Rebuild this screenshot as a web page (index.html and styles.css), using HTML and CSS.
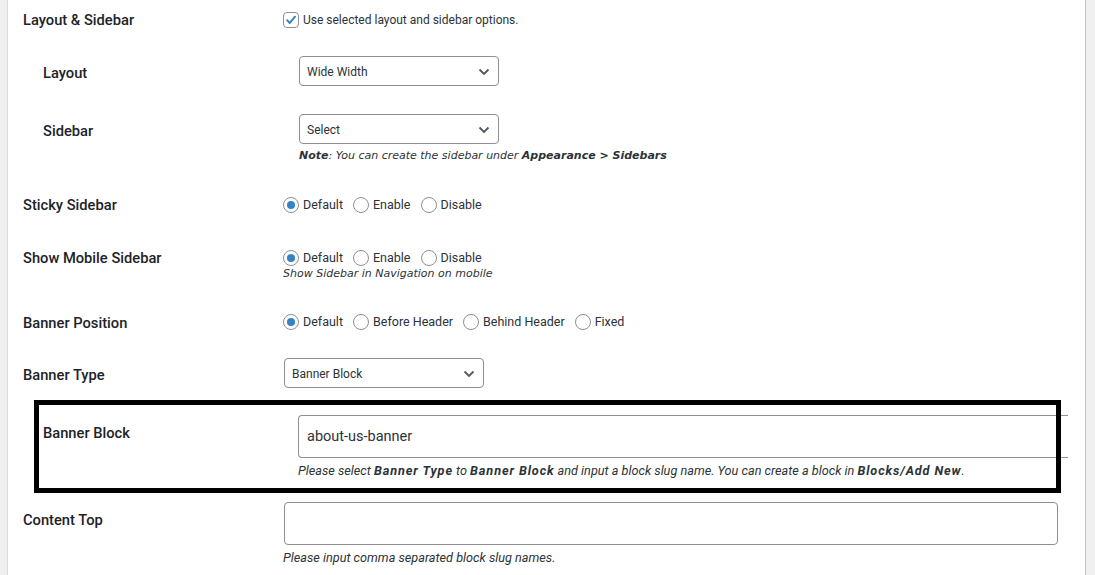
FILE: index.html
```html
<!DOCTYPE html>
<html>
<head>
<meta charset="utf-8">
<link rel="stylesheet" href="styles.css">
</head>
<body>
<div class="panel">
  <div class="row row-a">
    <div class="label">Layout &amp; Sidebar</div>
    <div class="field">
      <label class="check">
        <span class="checkbox"><svg viewBox="0 0 16 16" width="16" height="16"><path d="M3.6 8.2 L6.6 11.4 L12.6 4.2" fill="none" stroke="#3582c4" stroke-width="2.2" stroke-linecap="round" stroke-linejoin="round"/></svg></span>
        <span class="text">Use selected layout and sidebar options.</span>
      </label>
    </div>
  </div>

  <div class="row sub row-b">
    <div class="label sel-label">Layout</div>
    <div class="field">
      <div class="select"><span>Wide Width</span><svg class="chev" viewBox="0 0 12 8" width="12" height="8"><path d="M1.5 1.5 L6 6 L10.5 1.5" fill="none" stroke="#50575e" stroke-width="1.8"/></svg></div>
    </div>
  </div>

  <div class="row sub row-c">
    <div class="label sel-label">Sidebar</div>
    <div class="field">
      <div class="select"><span>Select</span><svg class="chev" viewBox="0 0 12 8" width="12" height="8"><path d="M1.5 1.5 L6 6 L10.5 1.5" fill="none" stroke="#50575e" stroke-width="1.8"/></svg></div>
      <p class="note"><b>Note</b>: You can create the sidebar under <b>Appearance &gt; Sidebars</b></p>
    </div>
  </div>

  <div class="row row-d">
    <div class="label">Sticky Sidebar</div>
    <div class="field">
      <div class="radios">
        <label class="opt"><span class="radio on"></span>Default</label>
        <label class="opt"><span class="radio"></span>Enable</label>
        <label class="opt"><span class="radio"></span>Disable</label>
      </div>
    </div>
  </div>

  <div class="row row-e">
    <div class="label">Show Mobile Sidebar</div>
    <div class="field">
      <div class="radios">
        <label class="opt"><span class="radio on"></span>Default</label>
        <label class="opt"><span class="radio"></span>Enable</label>
        <label class="opt"><span class="radio"></span>Disable</label>
      </div>
      <p class="hint">Show Sidebar in Navigation on mobile</p>
    </div>
  </div>

  <div class="row row-f">
    <div class="label">Banner Position</div>
    <div class="field">
      <div class="radios">
        <label class="opt"><span class="radio on"></span>Default</label>
        <label class="opt"><span class="radio"></span>Before Header</label>
        <label class="opt"><span class="radio"></span>Behind Header</label>
        <label class="opt"><span class="radio"></span>Fixed</label>
      </div>
    </div>
  </div>

  <div class="row row-g">
    <div class="label sel-label">Banner Type</div>
    <div class="field">
      <div class="select select-g"><span>Banner Block</span><svg class="chev" viewBox="0 0 12 8" width="12" height="8"><path d="M1.5 1.5 L6 6 L10.5 1.5" fill="none" stroke="#50575e" stroke-width="1.8"/></svg></div>
    </div>
  </div>

  <div class="highlight">
    <div class="row row-h">
      <div class="label h-label">Banner Block</div>
      <div class="field">
        <div class="textbox wide">about-us-banner</div>
        <p class="desc">Please select <b>Banner Type</b> to <b>Banner Block</b> and input a block slug name. You can create a block in <b>Blocks/Add New</b>.</p>
      </div>
    </div>
  </div>

  <div class="row row-i">
    <div class="label h-label">Content Top</div>
    <div class="field">
      <div class="textbox area"></div>
      <p class="desc desc-i">Please input comma separated block slug names.</p>
    </div>
  </div>
</div>
</body>
</html>
```

FILE: styles.css
```css
* { box-sizing: border-box; }
html, body { margin: 0; padding: 0; }
body {
  background: #f0f0f1;
  font-family: Roboto, "Liberation Sans", sans-serif;
  color: #1d2327;
  width: 1095px;
  height: 575px;
  overflow: hidden;
}
.panel {
  margin-left: 7px;
  width: 1079px;
  height: 575px;
  background: #fff;
  border-left: 1px solid #dcdcde;
  border-right: 1px solid #c3c4c7;
}
.row {
  display: grid;
  grid-template-columns: 260px 1fr;
  padding-left: 15px;
}
.row.sub {
  padding-left: 35px;
  grid-template-columns: 256px 1fr;
}
.label {
  font-size: 14.7px;
  font-weight: 500;
  line-height: 18px;
  color: #1d2327;
}
.sel-label { margin-top: 8px; }
.h-label { margin-top: 9px; }
.field { font-size: 12px; line-height: 18px; color: #2c3338; }

/* Row A */
.row-a { padding: 11px 0 12px 15px; }
.check { display: flex; align-items: center; height: 18px; }
.checkbox {
  width: 16px; height: 16px;
  border: 1px solid #8c8f94;
  border-radius: 4px;
  display: inline-flex;
  align-items: center; justify-content: center;
  margin-right: 4px;
  flex: none;
}
.checkbox svg { display: block; }

/* Selects */
.select {
  width: 200px;
  height: 30px;
  border: 1px solid #8c8f94;
  border-radius: 4px;
  display: flex;
  align-items: center;
  justify-content: space-between;
  padding: 1px 8px 0 7px;
  font-size: 12px;
  color: #2c3338;
}
.chev { display: block; }
.select-g { margin-left: 1px; }
.row-b { padding-top: 15px; padding-bottom: 13px; }
.row-c { padding-top: 15px; padding-bottom: 12px; }
.row-g { padding-top: 15px; padding-bottom: 12px; }

.note {
  margin: 4px 0 0;
  font-family: "DejaVu Sans", Verdana, sans-serif;
  font-style: italic;
  font-size: 11px;
  line-height: 16px;
  color: #2c3338;
}
.note b { font-weight: bold; }

/* Radios */
.radios { display: flex; height: 18px; align-items: center; font-size: 12.5px; }
.opt { display: flex; align-items: center; margin-right: 10px; }
.radio {
  width: 16px; height: 16px;
  border: 1px solid #8c8f94;
  border-radius: 50%;
  margin-right: 4px;
  display: inline-flex;
  align-items: center; justify-content: center;
  flex: none;
}
.radio.on::before {
  content: "";
  width: 8px; height: 8px;
  border-radius: 50%;
  background: #3582c4;
}
.row-d { padding: 20px 0 15px 15px; }
.row-e { padding: 20px 0 13px 15px; }
.row-f { padding: 20px 0 11px 15px; }
.row-f .radios { margin-top: -1px; }
.hint {
  margin: 0;
  font-family: "DejaVu Sans", Verdana, sans-serif;
  font-style: italic;
  font-size: 11px;
  line-height: 14px;
  color: #2c3338;
}

/* Highlight box */
.highlight {
  position: relative;
  margin-left: 26px;
  width: 1027px;
  height: 93px;
}
.highlight::after {
  content: "";
  position: absolute;
  inset: 0;
  border: 5px solid #000;
  pointer-events: none;
}
.row-h {
  padding: 15px 0 0 9px;
  grid-template-columns: 255px 1fr;
}
.textbox {
  border: 1px solid #8c8f94;
  border-radius: 4px;
  font-size: 14.5px;
  color: #2c3338;
  display: flex;
  align-items: center;
  padding-left: 8px;
}
.textbox.wide {
  width: 770px;
  height: 43px;
  border-right: none;
  border-radius: 4px 0 0 4px;
}
.desc {
  margin: 5px 0 0;
  font-style: italic;
  font-size: 12.7px;
  line-height: 16px;
  color: #2c3338;
}
.desc b { letter-spacing: 0.9px; }
.row-i { padding-top: 9px; }
.row-i .field { padding-left: 1px; }
.textbox.area { width: 774px; height: 43px; }
.desc-i { margin-top: 6px; line-height: 14px; margin-left: -1px; }
```
